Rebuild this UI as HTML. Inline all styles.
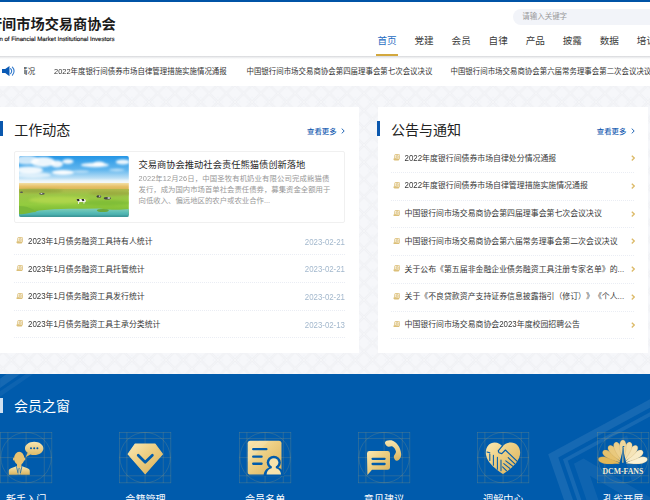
<!DOCTYPE html>
<html lang="zh-CN">
<head>
<meta charset="utf-8">
<title>中国银行间市场交易商协会</title>
<style>
*{margin:0;padding:0;box-sizing:border-box;}
html,body{width:650px;height:500px;overflow:hidden;}
body{position:relative;background:#f3f5f9;font-family:"Liberation Sans","Noto Sans CJK SC",sans-serif;color:#333;-webkit-font-smoothing:antialiased;}
.abs{position:absolute;white-space:nowrap;}
/* header */
#topbar{left:0;top:0;width:650px;height:1.9px;background:#0053a6;}
#header{left:0;top:2px;width:650px;height:54px;background:#fff;}
#logo-cn{left:-26.3px;top:12.3px;font-size:14.2px;font-weight:bold;color:#1a1a1a;line-height:24px;letter-spacing:0;}
#logo-en{left:-10.4px;top:34.8px;font-size:6.09px;color:#111;text-rendering:geometricPrecision;-webkit-text-stroke:.15px #111;line-height:10px;}
#search{left:512.7px;top:8.8px;width:160px;height:16.6px;border-radius:8.3px;background:#f2f4f9;}
#search span{position:absolute;left:9.6px;top:.6px;line-height:16.6px;font-size:7.47px;color:#999;}
.nav{top:31.7px;font-size:9.6px;line-height:18px;color:#3a3a3a;}
.nav.on{color:#1f6dc2;}
#navline{left:375.5px;top:54.3px;width:22.5px;height:1.9px;background:#d3a83e;}
/* ticker */
#ticker{left:0;top:56.2px;width:650px;height:29.5px;background:linear-gradient(180deg,#d6d7da 0,#ecedef 1.4px,#fafafa 2.6px,#fff 3.6px);}
.tk{top:64.6px;font-size:7.45px;line-height:14px;color:#333;}
/* cards */
.card{background:#fff;}
#cardL{left:-1px;top:107.2px;width:360px;height:245.6px;}
#cardR{left:377.6px;top:107.2px;width:270.9px;height:245.6px;}
.bar{width:3px;height:16px;background:#0a57ad;}
.h2{font-size:14px;line-height:20px;color:#222;}
.more{font-size:7.4px;line-height:12px;color:#1c62b3;font-weight:500;}
.li{font-size:7.9px;line-height:14px;color:#383838;text-spacing-trim:space-all;font-feature-settings:"halt" 0,"chws" 0;}
.date{font-size:8.7px;line-height:14px;color:#a3b8cd;text-align:right;transform:scaleX(.905);transform-origin:right center;margin-top:-.3px;}
.d{display:inline-block;transform:scaleY(1.09);transform-origin:50% 68%;}
.dash{height:1px;margin-top:-.35px;background:repeating-linear-gradient(90deg,#eaedf4 0,#eaedf4 1px,transparent 1px,transparent 2px);}
#newsbox{left:14px;top:151px;width:331px;height:71.5px;border:1px solid #f0f0f0;border-radius:2px;background:#fff;}
#newsimg{left:19.1px;top:155.9px;width:109.8px;height:61.5px;border-radius:2px;overflow:hidden;}
#newstitle{left:138.5px;top:157.8px;font-size:9.28px;line-height:14px;color:#2a2a2a;}
.desc{left:138.5px;font-size:7.39px;line-height:10.5px;color:#999;}
/* blue */
#blue{left:0;top:373.8px;width:650px;height:127px;background:#005bac;overflow:hidden;}
#mtitle{left:14px;top:396px;font-size:14px;line-height:20px;color:#fff;}
#mbar{left:-.4px;top:397.8px;width:3px;height:15.4px;background:rgba(255,255,255,.82);}
.ibox{top:431.5px;width:52.5px;height:52.5px;}
.ilabel{top:491.5px;font-size:10.1px;line-height:16px;color:#fff;text-align:center;width:80px;}
</style>
</head>
<body>
<svg class="abs" style="left:0;top:0" width="650" height="500"><defs><pattern id="bgp" width="17.2" height="17.2" patternUnits="userSpaceOnUse" patternTransform="translate(2.800 7.400)"><rect width="17.2" height="17.2" fill="#f6f7fa"/><path d="M-1 -1L18.200 18.200M18.200 -1L-1 18.200" stroke="#eff0f4" stroke-width="2.400" fill="none"/><path d="M-1 -1L18.200 18.200M18.200 -1L-1 18.200" stroke="#f5f6f9" stroke-width=".9" fill="none"/><path d="M8.600 3.600L13.600 8.600L8.600 13.600L3.600 8.600Z" stroke="#f0f2f6" stroke-width=".7" fill="none"/></pattern></defs><rect width="650" height="500" fill="url(#bgp)"/></svg>
<div id="topbar" class="abs"></div>
<div id="header" class="abs"></div>
<div id="logo-cn" class="abs">银行间市场交易商协会</div>
<div id="logo-en" class="abs">ation of Financial Market Institutional Investors</div>
<div id="search" class="abs"><span>请输入关键字</span></div>
<div class="abs nav on" style="left:377.5px">首页</div>
<div class="abs nav" style="left:414.5px">党建</div>
<div class="abs nav" style="left:451.6px">会员</div>
<div class="abs nav" style="left:488.6px">自律</div>
<div class="abs nav" style="left:525.7px">产品</div>
<div class="abs nav" style="left:562.7px">披露</div>
<div class="abs nav" style="left:599.7px">数据</div>
<div class="abs nav" style="left:636.8px">培训</div>
<div id="navline" class="abs"></div>

<div id="ticker" class="abs"></div>
<svg class="abs" style="left:1.7px;top:65.6px" width="13.2" height="10.2" viewBox="0 0 13.2 10.2"><path d="M0 3.100h3.200L7.500 0v10.200L3.200 7.100H0z" fill="#0a5ab5"/><path d="M8.600 2.600a3.400 3.400 0 0 1 0 5M10.400 1.100a5.600 5.600 0 0 1 0 8" fill="none" stroke="#2f78cc" stroke-width="1.100" stroke-linecap="round"/></svg>
<div class="abs" style="left:23.5px;top:60px;width:20px;height:20px;overflow:hidden"><div class="abs tk" style="left:-3.3px;top:4.6px">情况</div></div>
<div class="abs tk" style="left:54px"><span class="d">2022</span>年度银行间债券市场自律管理措施实施情况通报</div>
<div class="abs tk" style="left:246.5px">中国银行间市场交易商协会第四届理事会第七次会议决议</div>
<div class="abs tk" style="left:450.5px">中国银行间市场交易商协会第六届常务理事会第二次会议决议</div>

<div id="cardL" class="abs card"></div>
<div id="cardR" class="abs card"></div>

<div class="abs bar" style="left:-0.4px;top:121.3px;height:15.2px"></div>
<div class="abs h2" style="left:14.3px;top:119.5px">工作动态</div>
<div class="abs more" style="left:307px;top:125.75px">查看更多</div>
<svg class="abs" style="left:340.7px;top:128.2px" width="4" height="6" viewBox="0 0 4 6"><path d="M0.7 0.6L3.2 3L0.7 5.4" fill="none" stroke="#1c62b3" stroke-width="0.95"/></svg>
<div id="newsbox" class="abs"></div>
<svg id="newsimg" class="abs" viewBox="0 0 110 61.5" preserveAspectRatio="none">
<defs>
<linearGradient id="sky" x1="0" y1="0" x2="0" y2="1"><stop offset="0" stop-color="#2496e6"/><stop offset="0.5" stop-color="#63b7ee"/><stop offset="0.85" stop-color="#cfe8f7"/><stop offset="1" stop-color="#eef3ec"/></linearGradient>
<linearGradient id="gold" x1="0" y1="0" x2="0" y2="1"><stop offset="0" stop-color="#f3dfa4"/><stop offset="0.45" stop-color="#e6c068"/><stop offset="0.8" stop-color="#d8b655"/><stop offset="1" stop-color="#bcb54c"/></linearGradient>
<linearGradient id="grass" x1="0" y1="0" x2="0" y2="1"><stop offset="0" stop-color="#b0b74c"/><stop offset="0.22" stop-color="#9cc547"/><stop offset="0.6" stop-color="#93cc3f"/><stop offset="0.85" stop-color="#7dba35"/><stop offset="1" stop-color="#5f9e33"/></linearGradient>
<linearGradient id="water" x1="0" y1="0" x2="0" y2="1"><stop offset="0" stop-color="#7fcdb9"/><stop offset="0.5" stop-color="#55b9b4"/><stop offset="1" stop-color="#3a9ea4"/></linearGradient>
<filter id="b1" x="-20%" y="-20%" width="140%" height="140%"><feGaussianBlur stdDeviation="1.1"/></filter>
<filter id="b2" x="-20%" y="-20%" width="140%" height="140%"><feGaussianBlur stdDeviation="0.5"/></filter>
</defs>
<rect width="110" height="28" fill="url(#sky)"/>
<g filter="url(#b1)" fill="#fff">
<ellipse cx="8" cy="4" rx="12" ry="4.5" opacity=".75"/><ellipse cx="24" cy="6" rx="12" ry="5" opacity=".9"/><ellipse cx="38" cy="8" rx="6" ry="3.5" opacity=".9"/><ellipse cx="10" cy="14" rx="14" ry="3.6" opacity=".9"/><ellipse cx="14" cy="19" rx="18" ry="3" opacity=".65"/><ellipse cx="44" cy="16.5" rx="11" ry="2.6" opacity=".95"/><ellipse cx="49" cy="5.5" rx="5.5" ry="2.4" opacity=".9"/><ellipse cx="76" cy="9" rx="14" ry="2.2" opacity=".9"/><ellipse cx="80" cy="8" rx="6" ry="2.4" opacity=".9"/><ellipse cx="104" cy="6" rx="7" ry="2.4" opacity=".9"/><ellipse cx="98" cy="14" rx="8" ry="1.2" opacity=".6"/><ellipse cx="62" cy="15.5" rx="8" ry="1" opacity=".6"/>
<rect x="-5" y="24" width="120" height="4" opacity=".55"/>
</g>
<rect y="27" width="110" height="8" fill="url(#gold)"/>
<rect y="33" width="110" height="26" fill="url(#grass)"/>
<g filter="url(#b1)">
<ellipse cx="40" cy="44" rx="30" ry="3.5" fill="#b4d84e" opacity=".8"/>
<ellipse cx="92" cy="37.5" rx="22" ry="2.2" fill="#9aa83f" opacity=".8"/>
<ellipse cx="20" cy="35" rx="24" ry="1.8" fill="#8fa53c" opacity=".8"/>
<ellipse cx="85" cy="47" rx="26" ry="3" fill="#79b832" opacity=".7"/>
</g>
<path d="M0 53.5C10 52 14 56.5 20 54.5C40 52.3 60 53 80 52.5C95 54.5 103 53.5 110 53V61.5H0Z" fill="url(#water)"/>
<g filter="url(#b2)">
<path d="M0 50C8 50 14 53 18 56C12 56 6 59 0 58Z" fill="#7ab838"/>
<ellipse cx="84" cy="54.5" rx="6" ry="1.6" fill="#6aa83a"/>
<path d="M0 59.5h110v2H0Z" fill="#3d9393" opacity=".7"/>
</g>
<g filter="url(#b2)">
<path d="M57.6 43.6c1.5-.9 4-.5 6-.6c1.600 0 3.200.3 3.300 1.400l-.2 1.600h-1l-.3 1.800h-.7l-.1-1.800h-4.200l-.6 2h-.7l.1-2.400c-.9-.3-1.500-1-1.600-2z" fill="#f4f4f0"/>
<path d="M57.600 43.600c.8-.5 1.800-.6 2.700-.5l.3 1.800l-1.500.4c-.9-.3-1.400-.9-1.500-1.700zM62.500 43.100h2.400l.6 1.600l-1.800.6z" fill="#2b2b2b"/>
<ellipse cx="80" cy="40.400" rx="2.400" ry="1.200" fill="#3a3a3a"/><ellipse cx="80.800" cy="40.100" rx="1" ry=".6" fill="#eee"/>
<ellipse cx="88.500" cy="42.300" rx="3.600" ry="1.300" fill="#444"/><ellipse cx="90" cy="42" rx="1.500" ry=".7" fill="#eee"/>
<ellipse cx="23" cy="37.800" rx="2.800" ry="1" fill="#555"/><ellipse cx="22.500" cy="37.600" rx="1" ry=".5" fill="#ddd"/>
<ellipse cx="2.500" cy="36.300" rx="1.600" ry=".7" fill="#555"/>
</g>
</svg>
<div id="newstitle" class="abs">交易商协会推动社会责任熊猫债创新落地</div>
<div class="abs desc" style="top:173.5px;letter-spacing:.11px"><span class="d">2022</span>年<span class="d">12</span>月<span class="d">26</span>日，中国圣牧有机奶业有限公司完成熊猫债</div>
<div class="abs desc" style="top:184.85px">发行，成为国内市场首单社会责任债券，募集资金全额用于</div>
<div class="abs desc" style="top:196.2px">向低收入、偏远地区的农户或农业合作...</div>
<svg class="abs ic" style="left:16.00px;top:237.10px" width="7.1" height="6.6" viewBox="0 0 7.1 6.6"><rect x="1.75" y=".45" width="4.9" height="4.5" rx=".9" fill="#fffdf6" stroke="#d9bb70" stroke-width=".85"/><path d="M3.3 1.7h1.9M3.3 1.7v2.2M5.200 1.700v2.200M4.250 2.600v1.300" stroke="#d2b060" stroke-width=".65" fill="none"/><path d="M1.700 4.200A1 1 0 1 0 1.700 6.200h3.400a.9.900 0 0 0 .9-1.200" fill="#dcc07a" stroke="#dcc07a" stroke-width=".5" stroke-linejoin="round"/></svg>
<div class="abs li" style="left:28px;top:234.90px"><span class="d">2023</span>年<span class="d">1</span>月债务融资工具持有人统计</div>
<div class="abs date" style="left:284.5px;width:60px;top:234.90px">2023-02-21</div>
<div class="abs dash" style="left:14px;width:331px;top:254.50px"></div>
<svg class="abs ic" style="left:16.00px;top:264.80px" width="7.1" height="6.6" viewBox="0 0 7.1 6.6"><rect x="1.75" y=".45" width="4.9" height="4.5" rx=".9" fill="#fffdf6" stroke="#d9bb70" stroke-width=".85"/><path d="M3.3 1.7h1.9M3.3 1.7v2.2M5.200 1.700v2.200M4.250 2.600v1.300" stroke="#d2b060" stroke-width=".65" fill="none"/><path d="M1.700 4.200A1 1 0 1 0 1.700 6.200h3.400a.9.900 0 0 0 .9-1.200" fill="#dcc07a" stroke="#dcc07a" stroke-width=".5" stroke-linejoin="round"/></svg>
<div class="abs li" style="left:28px;top:262.60px"><span class="d">2023</span>年<span class="d">1</span>月债务融资工具托管统计</div>
<div class="abs date" style="left:284.5px;width:60px;top:262.60px">2023-02-21</div>
<div class="abs dash" style="left:14px;width:331px;top:282.20px"></div>
<svg class="abs ic" style="left:16.00px;top:292.50px" width="7.1" height="6.6" viewBox="0 0 7.1 6.6"><rect x="1.75" y=".45" width="4.9" height="4.5" rx=".9" fill="#fffdf6" stroke="#d9bb70" stroke-width=".85"/><path d="M3.3 1.7h1.9M3.3 1.7v2.2M5.200 1.700v2.200M4.250 2.600v1.300" stroke="#d2b060" stroke-width=".65" fill="none"/><path d="M1.700 4.200A1 1 0 1 0 1.700 6.200h3.400a.9.900 0 0 0 .9-1.200" fill="#dcc07a" stroke="#dcc07a" stroke-width=".5" stroke-linejoin="round"/></svg>
<div class="abs li" style="left:28px;top:290.30px"><span class="d">2023</span>年<span class="d">1</span>月债务融资工具发行统计</div>
<div class="abs date" style="left:284.5px;width:60px;top:290.30px">2023-02-21</div>
<div class="abs dash" style="left:14px;width:331px;top:309.90px"></div>
<svg class="abs ic" style="left:16.00px;top:320.20px" width="7.1" height="6.6" viewBox="0 0 7.1 6.6"><rect x="1.75" y=".45" width="4.9" height="4.5" rx=".9" fill="#fffdf6" stroke="#d9bb70" stroke-width=".85"/><path d="M3.3 1.7h1.9M3.3 1.7v2.2M5.200 1.700v2.200M4.250 2.600v1.300" stroke="#d2b060" stroke-width=".65" fill="none"/><path d="M1.700 4.200A1 1 0 1 0 1.700 6.200h3.400a.9.900 0 0 0 .9-1.200" fill="#dcc07a" stroke="#dcc07a" stroke-width=".5" stroke-linejoin="round"/></svg>
<div class="abs li" style="left:28px;top:318.00px"><span class="d">2023</span>年<span class="d">1</span>月债务融资工具主承分类统计</div>
<div class="abs date" style="left:284.5px;width:60px;top:318.00px">2023-02-13</div>
<div class="abs dash" style="left:14px;width:331px;top:337.60px"></div>
<div class="abs bar" style="left:377px;top:121.3px;height:15.2px"></div>
<div class="abs h2" style="left:390.9px;top:119.5px">公告与通知</div>
<div class="abs more" style="left:596.8px;top:125.75px">查看更多</div>
<svg class="abs" style="left:630.7px;top:128.2px" width="4" height="6" viewBox="0 0 4 6"><path d="M0.7 0.6L3.2 3L0.7 5.4" fill="none" stroke="#1c62b3" stroke-width="0.95"/></svg>
<svg class="abs ic" style="left:393.00px;top:154.30px" width="7.1" height="6.6" viewBox="0 0 7.1 6.6"><rect x="1.75" y=".45" width="4.9" height="4.5" rx=".9" fill="#fffdf6" stroke="#d9bb70" stroke-width=".85"/><path d="M3.3 1.7h1.9M3.3 1.7v2.2M5.200 1.700v2.200M4.250 2.600v1.300" stroke="#d2b060" stroke-width=".65" fill="none"/><path d="M1.700 4.200A1 1 0 1 0 1.700 6.200h3.400a.9.900 0 0 0 .9-1.200" fill="#dcc07a" stroke="#dcc07a" stroke-width=".5" stroke-linejoin="round"/></svg>
<div class="abs li" style="left:404.5px;top:151.50px"><span class="d">2022</span>年度银行间债券市场自律处分情况通报</div>
<svg class="abs" style="left:631.1px;top:155.10px" width="4.2" height="6" viewBox="0 0 4.2 6"><path d="M0.8 0.7L3.3 3.1L0.8 5.5" fill="none" stroke="#dcba68" stroke-width="1.35"/></svg>
<div class="abs dash" style="left:391px;width:244px;top:172.20px"></div>
<svg class="abs ic" style="left:393.00px;top:182.05px" width="7.1" height="6.6" viewBox="0 0 7.1 6.6"><rect x="1.75" y=".45" width="4.9" height="4.5" rx=".9" fill="#fffdf6" stroke="#d9bb70" stroke-width=".85"/><path d="M3.3 1.7h1.9M3.3 1.7v2.2M5.200 1.700v2.200M4.250 2.600v1.300" stroke="#d2b060" stroke-width=".65" fill="none"/><path d="M1.700 4.200A1 1 0 1 0 1.700 6.200h3.400a.9.900 0 0 0 .9-1.200" fill="#dcc07a" stroke="#dcc07a" stroke-width=".5" stroke-linejoin="round"/></svg>
<div class="abs li" style="left:404.5px;top:179.25px"><span class="d">2022</span>年度银行间债券市场自律管理措施实施情况通报</div>
<svg class="abs" style="left:631.1px;top:182.85px" width="4.2" height="6" viewBox="0 0 4.2 6"><path d="M0.8 0.7L3.3 3.1L0.8 5.5" fill="none" stroke="#dcba68" stroke-width="1.35"/></svg>
<div class="abs dash" style="left:391px;width:244px;top:199.95px"></div>
<svg class="abs ic" style="left:393.00px;top:209.80px" width="7.1" height="6.6" viewBox="0 0 7.1 6.6"><rect x="1.75" y=".45" width="4.9" height="4.5" rx=".9" fill="#fffdf6" stroke="#d9bb70" stroke-width=".85"/><path d="M3.3 1.7h1.9M3.3 1.7v2.2M5.200 1.700v2.200M4.250 2.600v1.300" stroke="#d2b060" stroke-width=".65" fill="none"/><path d="M1.700 4.200A1 1 0 1 0 1.700 6.200h3.400a.9.900 0 0 0 .9-1.200" fill="#dcc07a" stroke="#dcc07a" stroke-width=".5" stroke-linejoin="round"/></svg>
<div class="abs li" style="left:404.5px;top:207.00px">中国银行间市场交易商协会第四届理事会第七次会议决议</div>
<svg class="abs" style="left:631.1px;top:210.60px" width="4.2" height="6" viewBox="0 0 4.2 6"><path d="M0.8 0.7L3.3 3.1L0.8 5.5" fill="none" stroke="#dcba68" stroke-width="1.35"/></svg>
<div class="abs dash" style="left:391px;width:244px;top:227.70px"></div>
<svg class="abs ic" style="left:393.00px;top:237.55px" width="7.1" height="6.6" viewBox="0 0 7.1 6.6"><rect x="1.75" y=".45" width="4.9" height="4.5" rx=".9" fill="#fffdf6" stroke="#d9bb70" stroke-width=".85"/><path d="M3.3 1.7h1.9M3.3 1.7v2.2M5.200 1.700v2.200M4.250 2.600v1.300" stroke="#d2b060" stroke-width=".65" fill="none"/><path d="M1.700 4.200A1 1 0 1 0 1.700 6.200h3.400a.9.900 0 0 0 .9-1.200" fill="#dcc07a" stroke="#dcc07a" stroke-width=".5" stroke-linejoin="round"/></svg>
<div class="abs li" style="left:404.5px;top:234.75px">中国银行间市场交易商协会第六届常务理事会第二次会议决议</div>
<svg class="abs" style="left:631.1px;top:238.35px" width="4.2" height="6" viewBox="0 0 4.2 6"><path d="M0.8 0.7L3.3 3.1L0.8 5.5" fill="none" stroke="#dcba68" stroke-width="1.35"/></svg>
<div class="abs dash" style="left:391px;width:244px;top:255.45px"></div>
<svg class="abs ic" style="left:393.00px;top:265.30px" width="7.1" height="6.6" viewBox="0 0 7.1 6.6"><rect x="1.75" y=".45" width="4.9" height="4.5" rx=".9" fill="#fffdf6" stroke="#d9bb70" stroke-width=".85"/><path d="M3.3 1.7h1.9M3.3 1.7v2.2M5.200 1.700v2.200M4.250 2.600v1.300" stroke="#d2b060" stroke-width=".65" fill="none"/><path d="M1.700 4.200A1 1 0 1 0 1.700 6.200h3.400a.9.900 0 0 0 .9-1.200" fill="#dcc07a" stroke="#dcc07a" stroke-width=".5" stroke-linejoin="round"/></svg>
<div class="abs li" style="left:404.5px;top:262.50px">关于公布《第五届非金融企业债务融资工具注册专家名单》的...</div>
<svg class="abs" style="left:631.1px;top:266.10px" width="4.2" height="6" viewBox="0 0 4.2 6"><path d="M0.8 0.7L3.3 3.1L0.8 5.5" fill="none" stroke="#dcba68" stroke-width="1.35"/></svg>
<div class="abs dash" style="left:391px;width:244px;top:283.20px"></div>
<svg class="abs ic" style="left:393.00px;top:293.05px" width="7.1" height="6.6" viewBox="0 0 7.1 6.6"><rect x="1.75" y=".45" width="4.9" height="4.5" rx=".9" fill="#fffdf6" stroke="#d9bb70" stroke-width=".85"/><path d="M3.3 1.7h1.9M3.3 1.7v2.2M5.200 1.700v2.200M4.250 2.600v1.300" stroke="#d2b060" stroke-width=".65" fill="none"/><path d="M1.700 4.200A1 1 0 1 0 1.700 6.200h3.400a.9.900 0 0 0 .9-1.200" fill="#dcc07a" stroke="#dcc07a" stroke-width=".5" stroke-linejoin="round"/></svg>
<div class="abs li" style="left:404.5px;top:290.25px">关于《不良贷款资产支持证券信息披露指引（修订）》《个人...</div>
<svg class="abs" style="left:631.1px;top:293.85px" width="4.2" height="6" viewBox="0 0 4.2 6"><path d="M0.8 0.7L3.3 3.1L0.8 5.5" fill="none" stroke="#dcba68" stroke-width="1.35"/></svg>
<div class="abs dash" style="left:391px;width:244px;top:310.95px"></div>
<svg class="abs ic" style="left:393.00px;top:320.80px" width="7.1" height="6.6" viewBox="0 0 7.1 6.6"><rect x="1.75" y=".45" width="4.9" height="4.5" rx=".9" fill="#fffdf6" stroke="#d9bb70" stroke-width=".85"/><path d="M3.3 1.7h1.9M3.3 1.7v2.2M5.200 1.700v2.200M4.250 2.600v1.300" stroke="#d2b060" stroke-width=".65" fill="none"/><path d="M1.700 4.200A1 1 0 1 0 1.700 6.200h3.400a.9.900 0 0 0 .9-1.200" fill="#dcc07a" stroke="#dcc07a" stroke-width=".5" stroke-linejoin="round"/></svg>
<div class="abs li" style="left:404.5px;top:318.00px">中国银行间市场交易商协会<span class="d">2023</span>年度校园招聘公告</div>
<svg class="abs" style="left:631.1px;top:321.60px" width="4.2" height="6" viewBox="0 0 4.2 6"><path d="M0.8 0.7L3.3 3.1L0.8 5.5" fill="none" stroke="#dcba68" stroke-width="1.35"/></svg>
<div class="abs dash" style="left:391px;width:244px;top:338.70px"></div>

<div id="blue" class="abs"></div>
<svg class="abs" style="left:0;top:373.8px" width="650" height="126.2" viewBox="0 373.800 650 126.200"><g fill="#fff" fill-opacity=".085">
<path d="M548.200 454.100L650 399.100V407.600L558.300 457.200L573.100 500H564.100Z"/>
<path d="M563 459L650 412V416.200L567.800 460.600L581.400 500H577.200Z"/>
<path d="M574 463.500L583.500 458.400L650 497V500H632L590 475.500L598.500 500H586.600Z" fill-opacity=".06"/>
<path d="M618 440L627 435L641 476L632 481Z" fill-opacity=".05"/>
<path d="M0 378.500L6.500 373.800H20.300L0 387.700Z"/>
<path d="M0 391L26 373.800H33L0 396.500Z" fill-opacity=".05"/>
</g></svg>
<div id="mbar" class="abs"></div>
<div id="mtitle" class="abs">会员之窗</div>
<svg width="0" height="0" style="position:absolute"><defs>
<linearGradient id="gd" x1="0" y1="0" x2="1" y2="1"><stop offset="0" stop-color="#fae8b2"/><stop offset="0.45" stop-color="#ecce82"/><stop offset="1" stop-color="#d9b05a"/></linearGradient>
<linearGradient id="gd2" x1="0" y1="0" x2="0" y2="1"><stop offset="0" stop-color="#f8e6b0"/><stop offset="1" stop-color="#d9b45e"/></linearGradient>
</defs></svg>
<svg class="abs" style="left:0.1px;top:432px;overflow:visible" width="52.200" height="51.200" viewBox="0 0 52.200 51.200"><g fill="none" stroke="#c9b06a" stroke-opacity=".42" stroke-width=".45"><rect x=".3" y=".3" width="51.6" height="50.6"/><circle cx="26.1" cy="25.6" r="25.2"/><path d="M7.9 .3v50.600M26.1 .3v50.600M44.300 .3v50.600M.3 6.500h51.600M.3 25.600h51.600M.3 43.800h51.600"/></g><ellipse cx="19.200" cy="26.400" rx="5.100" ry="6.600" fill="#e9c372"/><ellipse cx="13.900" cy="27" rx=".9" ry="1.500" fill="#e9c372"/><ellipse cx="24.500" cy="27" rx=".9" ry="1.500" fill="#e9c372"/><rect x="17" y="31" width="4.400" height="5" fill="#e9c372"/><path d="M8.800 42.800V39C8.800 37.500 9.800 36.600 11 36.200L16.300 34.300L19.200 36.200L22.100 34.300L27.500 36.200C28.800 36.600 29.800 37.500 29.800 39V42.800Z" fill="url(#gd2)"/><path d="M16.500 34.600L18 41M21.900 34.600L20.400 41" stroke="#005bac" stroke-width=".75" fill="none"/><path d="M18.600 36.400h1.200l.5 6.400h-2.200z" fill="#f2d894" stroke="#005bac" stroke-width=".45"/><path d="M34.200 9.800c5.100 0 9.200 2.900 9.200 6.600s-4.100 6.600-9.200 6.600c-1.400 0-2.700-.2-3.900-.6l-4.700 2.800l2-4.500c-1.600-1.200-2.600-2.700-2.600-4.300c0-3.700 4.100-6.600 9.200-6.600z" fill="url(#gd2)"/>
<circle cx="31" cy="16.300" r="1" fill="#005bac"/><circle cx="34.200" cy="16.300" r="1" fill="#005bac"/><circle cx="37.400" cy="16.300" r="1" fill="#005bac"/></svg>
<div class="abs ilabel" style="left:-13.8px">新手入门</div>
<svg class="abs" style="left:119.4px;top:432px;overflow:visible" width="52.200" height="51.200" viewBox="0 0 52.200 51.200"><g fill="none" stroke="#c9b06a" stroke-opacity=".42" stroke-width=".45"><rect x=".3" y=".3" width="51.6" height="50.6"/><circle cx="26.1" cy="25.6" r="25.2"/><path d="M7.9 .3v50.600M26.1 .3v50.600M44.300 .3v50.600M.3 6.500h51.600M.3 25.600h51.600M.3 43.800h51.600"/></g><path d="M16.200 12h19.800l7.400 10.200l-17.200 19.300l-17-19.300z" fill="url(#gd)" stroke="url(#gd)" stroke-width="1.200" stroke-linejoin="round"/>
<path d="M19.200 23.300l7 7l7.200-7" fill="none" stroke="#005bac" stroke-width="2.700" stroke-linecap="round" stroke-linejoin="round"/></svg>
<div class="abs ilabel" style="left:105.5px">会籍管理</div>
<svg class="abs" style="left:239px;top:432px;overflow:visible" width="52.200" height="51.200" viewBox="0 0 52.200 51.200"><g fill="none" stroke="#c9b06a" stroke-opacity=".42" stroke-width=".45"><rect x=".3" y=".3" width="51.6" height="50.6"/><circle cx="26.1" cy="25.6" r="25.2"/><path d="M7.9 .3v50.600M26.1 .3v50.600M44.300 .3v50.600M.3 6.500h51.600M.3 25.600h51.600M.3 43.800h51.600"/></g><rect x="8.700" y="8.700" width="33.800" height="33.800" rx="2.600" fill="url(#gd)"/><path d="M8.700 30L30 8.700H20L8.700 20Z" fill="#fff" fill-opacity=".13"/><path d="M14.200 17.200h13.200M14.200 24.700h8.400M14.200 31.750h8.400" stroke="#005bac" stroke-width="2.300" stroke-linecap="round"/><path d="M24.600 44c0-5.500 3.600-9.300 10.200-9.300s10.200 3.800 10.200 9.300z" fill="#005bac"/><ellipse cx="34.800" cy="30.500" rx="7.100" ry="6.800" fill="#005bac"/><ellipse cx="34.800" cy="30.500" rx="4.600" ry="4.300" fill="#f6e3ac"/><rect x="32.800" y="33.500" width="4" height="3.500" fill="#f6e3ac"/><path d="M27.600 42.600c.3-4.200 2.800-6.600 7.200-6.600s6.900 2.400 7.200 6.600z" fill="#f6e3ac"/></svg>
<div class="abs ilabel" style="left:225.1px">会员名单</div>
<svg class="abs" style="left:357.9px;top:432px;overflow:visible" width="52.200" height="51.200" viewBox="0 0 52.200 51.200"><g fill="none" stroke="#c9b06a" stroke-opacity=".42" stroke-width=".45"><rect x=".3" y=".3" width="51.6" height="50.6"/><circle cx="26.1" cy="25.6" r="25.2"/><path d="M7.9 .3v50.600M26.1 .3v50.600M44.300 .3v50.600M.3 6.500h51.600M.3 25.600h51.600M.3 43.800h51.600"/></g><path d="M11.400 19h18.200a2.400 2.400 0 0 1 2.400 2.400v14a2.400 2.400 0 0 1-2.400 2.400h-15.600l-4.600 5.200l-.4-21.600a2.400 2.400 0 0 1 2.400-2.400z" fill="url(#gd)"/>
<path d="M14.600 26.800h12M14.600 32h12" stroke="#005bac" stroke-width="2.300" stroke-linecap="round"/>
<path d="M27 10.400C27.400 8.700 30 7.800 33.500 8.300C38.200 9.500 42.600 15 43.200 22C43.400 25.200 41.600 28.200 39 28.800C37.400 29 36 27.200 35.800 24.600C35.800 23 38 21.600 38 19.800C37.600 17.500 36.500 15.400 34.500 14.400C33 13.900 31.600 15 30.500 14.700C28.500 14.100 26.600 12.200 27 10.400Z" fill="url(#gd2)"/></svg>
<div class="abs ilabel" style="left:344.0px">意见建议</div>
<svg class="abs" style="left:477.2px;top:432px;overflow:visible" width="52.200" height="51.200" viewBox="0 0 52.200 51.200"><g fill="none" stroke="#c9b06a" stroke-opacity=".42" stroke-width=".45"><rect x=".3" y=".3" width="51.6" height="50.6"/><circle cx="26.1" cy="25.6" r="25.2"/><path d="M7.9 .3v50.600M26.1 .3v50.600M44.300 .3v50.600M.3 6.500h51.600M.3 25.600h51.600M.3 43.800h51.600"/></g><path d="M26 42C22 39.500 8.800 31 8.800 20.500C8.800 14.500 12.800 10.400 17.600 10.400C21 10.400 24 12 25.600 14.600C27.200 12 30.500 10.400 34 10.400C39 10.400 43.200 14.500 43.200 20.500C43.200 31 30 39.500 26 42Z" fill="url(#gd)"/><path d="M25.200 14.200L21.200 18.800L22 20.800L24.800 21.600L28.400 18L40 29.200" fill="none" stroke="#005bac" stroke-width="1.150" stroke-linejoin="round" stroke-linecap="round"/><path d="M10 20L12.800 20.800M12.800 22V28.400M16.400 23.200V33.200M20.400 25.200V37.200M24 28V38.800M31.200 25.600L37.600 31.600M28.800 28.800L36 34.400M26.800 31.600L32.800 36.400M25.600 34.800L29.600 38.800" fill="none" stroke="#005bac" stroke-width="1.050" stroke-linecap="round"/></svg>
<div class="abs ilabel" style="left:463.3px">调解中心</div>
<svg class="abs" style="left:597px;top:432px;overflow:visible" width="52.200" height="51.200" viewBox="0 0 52.200 51.200"><g fill="none" stroke="#c9b06a" stroke-opacity=".42" stroke-width=".45"><rect x=".3" y=".3" width="51.6" height="50.6"/><circle cx="26.1" cy="25.6" r="25.2"/><path d="M7.9 .3v50.600M26.1 .3v50.600M44.300 .3v50.600M.3 6.500h51.600M.3 25.600h51.600M.3 43.800h51.600"/></g><path transform="translate(25.9 31.800) rotate(-79)" d="M0 -2C-1.500 -8.5 -3.400 -13.8 -3.300 -19.1C-3.200 -22.9 -1.800 -25 0 -25C1.800 -25 3.200 -22.9 3.300 -19.1C3.400 -13.8 1.500 -8.5 0 -2Z" fill="#e2b858" stroke="#b9924a" stroke-opacity=".55" stroke-width=".35"/><path transform="translate(25.9 31.800) rotate(79)" d="M0 -2C-1.500 -8.5 -3.400 -13.8 -3.300 -19.1C-3.200 -22.9 -1.800 -25 0 -25C1.800 -25 3.200 -22.9 3.300 -19.1C3.400 -13.8 1.500 -8.5 0 -2Z" fill="#fbf2d6" stroke="#b9924a" stroke-opacity=".55" stroke-width=".35"/><path transform="translate(25.9 31.800) rotate(-58)" d="M0 -2C-1.500 -8.0 -3.400 -13.1 -3.300 -18.1C-3.200 -21.6 -1.800 -23.6 0 -23.6C1.800 -23.6 3.200 -21.6 3.300 -18.1C3.400 -13.1 1.500 -8.0 0 -2Z" fill="#e6c16c" stroke="#b9924a" stroke-opacity=".55" stroke-width=".35"/><path transform="translate(25.9 31.800) rotate(58)" d="M0 -2C-1.500 -8.0 -3.400 -13.1 -3.300 -18.1C-3.200 -21.6 -1.800 -23.6 0 -23.6C1.800 -23.6 3.200 -21.6 3.300 -18.1C3.400 -13.1 1.500 -8.0 0 -2Z" fill="#f8ebc7" stroke="#b9924a" stroke-opacity=".55" stroke-width=".35"/><path transform="translate(25.9 31.800) rotate(-38)" d="M0 -2C-1.500 -7.8 -3.400 -12.6 -3.300 -17.5C-3.200 -20.9 -1.800 -22.8 0 -22.8C1.800 -22.8 3.200 -20.9 3.300 -17.5C3.400 -12.6 1.500 -7.8 0 -2Z" fill="#e9c97d" stroke="#b9924a" stroke-opacity=".55" stroke-width=".35"/><path transform="translate(25.9 31.800) rotate(38)" d="M0 -2C-1.500 -7.8 -3.400 -12.6 -3.300 -17.5C-3.200 -20.9 -1.800 -22.8 0 -22.8C1.800 -22.8 3.200 -20.9 3.300 -17.5C3.400 -12.6 1.500 -7.8 0 -2Z" fill="#f5e4b8" stroke="#b9924a" stroke-opacity=".55" stroke-width=".35"/><path transform="translate(25.9 31.800) rotate(-19)" d="M0 -2C-1.500 -7.8 -3.400 -12.6 -3.300 -17.5C-3.200 -20.9 -1.800 -22.8 0 -22.8C1.800 -22.8 3.200 -20.9 3.300 -17.5C3.400 -12.6 1.500 -7.8 0 -2Z" fill="#ecd08d" stroke="#b9924a" stroke-opacity=".55" stroke-width=".35"/><path transform="translate(25.9 31.800) rotate(19)" d="M0 -2C-1.500 -7.8 -3.400 -12.6 -3.300 -17.5C-3.200 -20.9 -1.800 -22.8 0 -22.8C1.800 -22.8 3.200 -20.9 3.300 -17.5C3.400 -12.6 1.500 -7.8 0 -2Z" fill="#f2deaa" stroke="#b9924a" stroke-opacity=".55" stroke-width=".35"/><path transform="translate(25.9 31.800) rotate(0)" d="M0 -2C-1.500 -8.1 -3.400 -13.2 -3.300 -18.2C-3.200 -21.8 -1.800 -23.8 0 -23.8C1.800 -23.8 3.200 -21.8 3.300 -18.2C3.400 -13.2 1.500 -8.1 0 -2Z" fill="#efd79c" stroke="#b9924a" stroke-opacity=".55" stroke-width=".35"/><path d="M25.300 15.200c.3-1.300 1.700-1.500 2.300-.7l-1 .6l.4 6.500l3.200 13.400l-4.300 1.800l-4.300-1.800l3.300-13.400z" fill="#005bac"/><path d="M25.500 15.600c.3-.7 1-.8 1.400-.4l-.8.400l.1 6.200l.3 9h-1.300l.5-9z" fill="#ecd28c"/><text x="25.900" y="42" text-anchor="middle" font-family="'Liberation Serif',serif" font-weight="bold" font-size="7.700" fill="#f6ecd0" textLength="40.800" lengthAdjust="spacingAndGlyphs">DCM-FANS</text></svg>
<div class="abs ilabel" style="left:583.1px">孔雀开屏</div>
</body>
</html>
